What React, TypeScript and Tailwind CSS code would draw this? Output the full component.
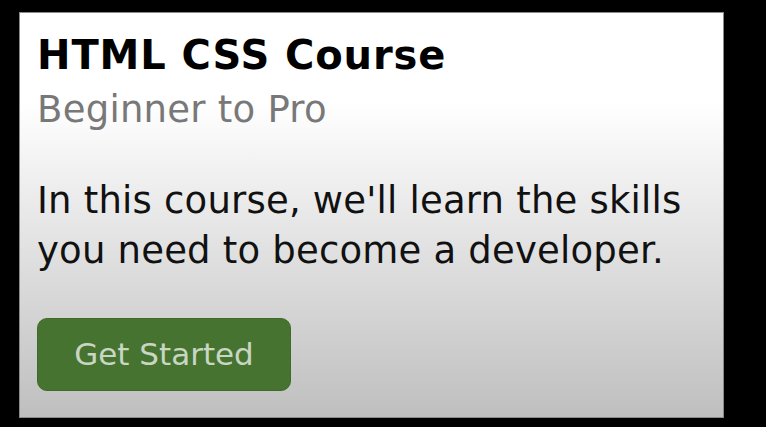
export default function App() {
  return (
    <div className="w-[766px] h-[427px] bg-black pt-[12px] pl-[19px]" style={{ fontFamily: '"DejaVu Sans", Verdana, sans-serif' }}>
      <div className="w-[705px] h-[406px] border border-[#8a8a8a] bg-[linear-gradient(to_bottom,#ffffff_22%,#bfbfbf_100%)] pl-[17px] pt-[18px]">
        <div className="text-[40px] leading-[48px] font-bold text-black tracking-[0.9px]">HTML CSS Course</div>
        <div className="mt-[9px] text-[37px] leading-[44px] text-[#787878] tracking-[0.25px]">Beginner to Pro</div>
        <p className="mt-[44px] text-[37px] leading-[50px] text-[#111] w-[668px] tracking-[0.2px]">
          In this course, we'll learn the skills you need to become a developer.
        </p>
        <button className="mt-[42px] w-[254px] h-[73px] rounded-[10px] bg-[#467430] border border-[#3f6a2b] text-[31px] text-[#c9d6c3] flex items-center justify-center">
          Get Started
        </button>
      </div>
    </div>
  );
}
